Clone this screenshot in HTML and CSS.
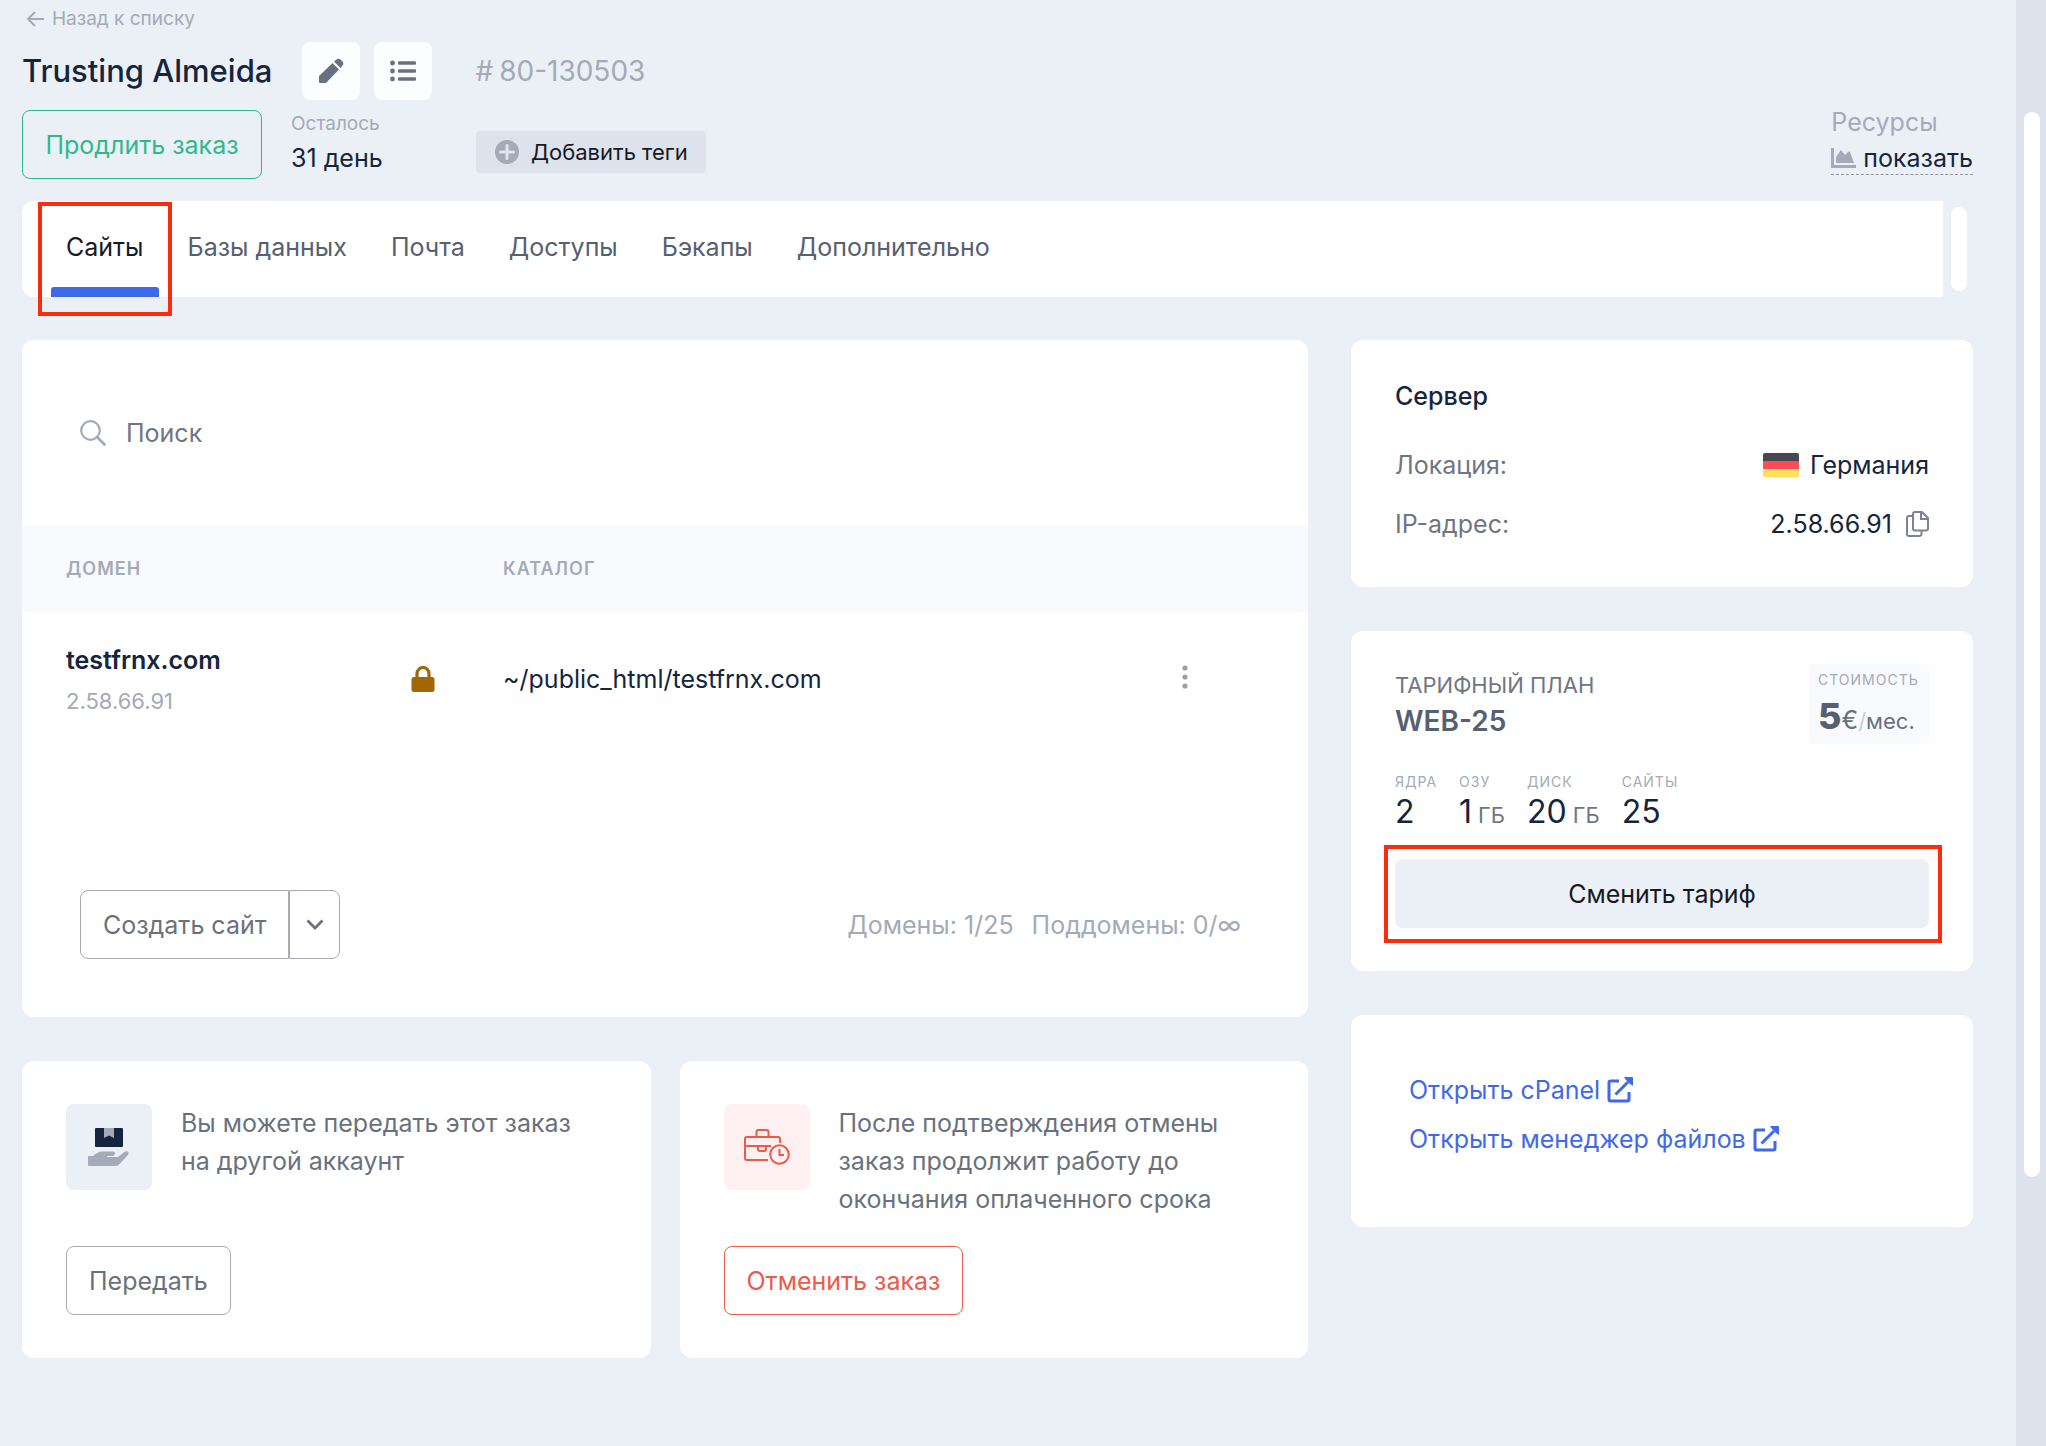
FILE: index.html
```html
<!DOCTYPE html>
<html lang="ru">
<head>
    <meta charset="UTF-8">
    <meta name="viewport" content="width=device-width, initial-scale=1.0">
    <title>Trusting Almeida</title>
    <link rel="stylesheet" href="styles.css">
</head>
<body>
    <div class="page">
        <header class="header">
            <a class="back" href="#">
                <svg width="18" height="16" viewBox="0 0 18 16" fill="none" stroke="currentColor" stroke-width="2"><path d="M18 8H2M9 1L2 8l7 7"/></svg>
                Назад к списку
            </a>
            <div class="title-row">
                <h1>Trusting Almeida</h1>
                <button class="icon-btn" aria-label="Переименовать">
                    <svg width="26" height="26" viewBox="0 0 26 26" fill="currentColor"><path d="M1 18L14.500 5l6.500 6.500L8 25H2q-1 0-1-1zM16 3.500L18.500 1.500q2-1.500 4 0l2 2q1.500 2 0 4L22.500 10z"/></svg>
                </button>
                <button class="icon-btn" aria-label="Список">
                    <svg width="26" height="22" viewBox="0 0 26 22" fill="currentColor"><circle cx="2.500" cy="3" r="2.400"/><circle cx="2.500" cy="11" r="2.400"/><circle cx="2.500" cy="19" r="2.400"/><rect x="8" y="1.300" width="18" height="3.400" rx="1"/><rect x="8" y="9.300" width="18" height="3.400" rx="1"/><rect x="8" y="17.300" width="18" height="3.400" rx="1"/></svg>
                </button>
                <span class="order-id"><span>#</span><span>80-130503</span></span>
            </div>
            <div class="meta-row">
                <button class="btn btn-green">Продлить заказ</button>
                <div class="left">
                    <span class="left-label">Осталось</span>
                    <span>31 день</span>
                </div>
                <button class="tags-btn">
                    <svg width="24" height="24" viewBox="0 0 24 24"><circle cx="12" cy="12" r="12" fill="#a3aab8"/><path d="M12 5.500v13M5.500 12h13" stroke="#dfe3ec" stroke-width="3" stroke-linecap="round"/></svg>
                    Добавить теги
                </button>
                <div class="resources">
                    <span class="resources-label">Ресурсы</span>
                    <a class="resources-link" href="#">
                        <svg width="25" height="20" viewBox="0 0 25 20" fill="#a3aab8"><path d="M0 0h3v17h22v3H0z"/><path d="M5 15V9l5-7 4 5 3-3q1-1 2 0l4 11z"/></svg>
                        показать
                    </a>
                </div>
            </div>
        </header>

        <div class="tabs-wrap">
            <nav class="tabs">
                <a class="tab active" href="#">Сайты<span class="mark mark-tab"></span></a>
                <a class="tab" href="#">Базы данных</a>
                <a class="tab" href="#">Почта</a>
                <a class="tab" href="#">Доступы</a>
                <a class="tab" href="#">Бэкапы</a>
                <a class="tab" href="#">Дополнительно</a>
            </nav>
            <div class="tabs-scroll"></div>
        </div>

        <div class="layout">
            <main class="main">
                <section class="card sites">
                    <label class="search">
                        <svg width="26" height="26" viewBox="0 0 26 26" fill="none" stroke="#a3aab8" stroke-width="2.200"><circle cx="10.500" cy="10.500" r="9.300"/><path d="M17 17l7.500 7.500" stroke-width="2.800" stroke-linecap="round"/></svg>
                        <input type="text" placeholder="Поиск" aria-label="Поиск">
                    </label>
                    <table class="sites-table">
                        <thead>
                            <tr>
                                <th class="col-domain">Домен</th>
                                <th class="col-ssl"></th>
                                <th class="col-path">Каталог</th>
                                <th class="col-menu"></th>
                            </tr>
                        </thead>
                        <tbody>
                            <tr>
                                <td>
                                    <div class="domain">testfrnx.com</div>
                                    <div class="ip">2.58.66.91</div>
                                </td>
                                <td>
                                    <svg width="24" height="26" viewBox="0 0 24 26"><path d="M6 12V7.500a6 6 0 0 1 12 0V12" fill="none" stroke="#a36605" stroke-width="3.200"/><rect x="0.500" y="11" width="23" height="15" rx="2.500" fill="#a36605"/></svg>
                                </td>
                                <td>~/public_html/testfrnx.com</td>
                                <td>
                                    <button class="menu-btn" aria-label="Меню">
                                        <svg width="6" height="24" viewBox="0 0 6 24" fill="#9ba0a8"><circle cx="3" cy="3" r="2.600"/><circle cx="3" cy="12" r="2.600"/><circle cx="3" cy="21" r="2.600"/></svg>
                                    </button>
                                </td>
                            </tr>
                        </tbody>
                    </table>
                    <div class="sites-footer">
                        <div class="btn-group">
                            <button class="btn btn-gray">Создать сайт</button>
                            <button class="btn btn-gray btn-drop" aria-label="Ещё">
                                <svg width="18" height="11" viewBox="0 0 18 11" fill="none" stroke="currentColor" stroke-width="2.800"><path d="M1.500 1.500L9 9l7.500-7.500"/></svg>
                            </button>
                        </div>
                        <div class="limits">
                            <span>Домены: 1/25</span>
                            <span>Поддомены: 0/∞</span>
                        </div>
                    </div>
                </section>

                <div class="actions">
                    <section class="card action">
                        <div class="action-info">
                            <div class="action-icon">
                                <svg width="42" height="38" viewBox="0 0 42 38"><path d="M8 0h26q1 0 1 1v17q0 1-1 1H8q-1 0-1-1V1q0-1 1-1z" fill="#14253d"/><path d="M16 0h10v10l-5-2.500L16 10z" fill="#a3aab8"/><path d="M1 28h4q5-4.500 9-4.500h11q2.500.5 2 2.500-.5 2-3 2h-5v1h9q2 0 4-1.500l5-4q2.500-1 3.500 1 .5 1.500-1 3L32 35.500Q30 38 27 38H1q-1 0-1-1v-8q0-1 1-1z" fill="#a3aab8"/></svg>
                            </div>
                            <p>Вы можете передать этот заказ на другой аккаунт</p>
                        </div>
                        <button class="btn btn-gray">Передать</button>
                    </section>
                    <section class="card action">
                        <div class="action-info">
                            <div class="action-icon danger">
                                <svg width="46" height="36" viewBox="0 0 46 36" fill="none" stroke="#ee5a49" stroke-width="2"><path d="M12.500 8V3q0-2 2-2h8q2 0 2 2v5M36 14v-4q0-2-2-2H3Q1 8 1 10v19q0 2 2 2h21M1 17h26M14 17v3q0 2 2 2h4q2 0 2-2v-3"/><circle cx="35.500" cy="25.500" r="9.300"/><path d="M35.500 20v6h4.500"/></svg>
                            </div>
                            <p>После подтверждения отмены заказ продолжит работу до окончания оплаченного срока</p>
                        </div>
                        <button class="btn btn-red">Отменить заказ</button>
                    </section>
                </div>
            </main>

            <aside class="side">
                <section class="card server">
                    <h2>Сервер</h2>
                    <div class="server-row">
                        <span class="muted">Локация:</span>
                        <span class="value">
                            <svg width="36" height="24" viewBox="0 0 36 24"><path d="M2 0h32q2 0 2 2v6H0V2q0-2 2-2z" fill="#464655"/><path d="M0 8h36v8H0z" fill="#ff4b55"/><path d="M0 16h36v6q0 2-2 2H2q-2 0-2-2z" fill="#ffe15a"/></svg>
                            Германия
                        </span>
                    </div>
                    <div class="server-row">
                        <span class="muted">IP-адрес:</span>
                        <span class="value value-ip">
                            2.58.66.91
                            <button class="copy-btn" aria-label="Копировать">
                                <svg width="23" height="26" viewBox="0 0 23 26" fill="none" stroke="currentColor" stroke-width="2"><path d="M9 1h7l6 6v10.500q0 2-2 2H9q-2 0-2-2V3q0-2 2-2zM15 1v7h7M7 5H3Q1 5 1 7v16q0 2 2 2h10q2.500 0 2.500-2v-3"/></svg>
                            </button>
                        </span>
                    </div>
                </section>

                <section class="card plan">
                    <div class="plan-head">
                        <div>
                            <div class="plan-label">Тарифный план</div>
                            <div class="plan-name">WEB-25</div>
                        </div>
                        <div class="price">
                            <div class="price-label">Стоимость</div>
                            <div class="price-value"><b>5</b><span class="euro">€</span><span class="slash">/</span>мес.</div>
                        </div>
                    </div>
                    <div class="specs">
                        <div><div class="spec-label">Ядра</div><div class="spec-value">2</div></div>
                        <div><div class="spec-label">Озу</div><div class="spec-value">1 <small>ГБ</small></div></div>
                        <div><div class="spec-label">Диск</div><div class="spec-value">20 <small>ГБ</small></div></div>
                        <div><div class="spec-label">Сайты</div><div class="spec-value">25</div></div>
                    </div>
                    <div class="plan-action">
                        <button class="btn btn-light">Сменить тариф</button>
                        <span class="mark mark-plan"></span>
                    </div>
                </section>

                <section class="card links">
                    <a href="#">Открыть cPanel
                        <svg width="26" height="26" viewBox="0 0 26 26" fill="none" stroke="currentColor" stroke-width="3"><path d="M12 4H3.500Q2 4 2 5.500v17Q2 24 3.500 24h17q1.500 0 1.500-1.500V15M8.500 17.500L21 5"/><path d="M17 0h8q1 0 1 1v8l-3-2-4-4z" fill="currentColor" stroke="none"/></svg>
                    </a>
                    <a href="#">Открыть менеджер файлов
                        <svg width="26" height="26" viewBox="0 0 26 26" fill="none" stroke="currentColor" stroke-width="3"><path d="M12 4H3.500Q2 4 2 5.500v17Q2 24 3.500 24h17q1.500 0 1.500-1.500V15M8.500 17.500L21 5"/><path d="M17 0h8q1 0 1 1v8l-3-2-4-4z" fill="currentColor" stroke="none"/></svg>
                    </a>
                </section>
            </aside>
        </div>
    </div>
    <div class="scrollbar"><div class="scrollbar-thumb"></div></div>
</body>
</html>
```
FILE: styles.css
```css
* {
    box-sizing: border-box;
}

body {
    display: flex;
    min-height: 100vh;
    margin: 0;
    background: #ebf0f7;
    color: #14253d;
    font-family: Inter, sans-serif;
    font-size: 25px;
    line-height: 38px;
}

h1, h2, p {
    margin: 0;
}

a {
    color: inherit;
    text-decoration: none;
}

button, input {
    font: inherit;
    color: inherit;
}

button {
    padding: 0;
    border: none;
    background: none;
    cursor: pointer;
}

svg {
    display: block;
    flex: none;
}

.page {
    flex: 1;
    min-width: 0;
    padding: 4px 43px 44px 22px;
}

.scrollbar {
    width: 30px;
    padding: 112px 6px 0 8px;
    background: #dee2ec;
}

.scrollbar-thumb {
    height: 1065px;
    border-radius: 8px;
    background: #fff;
}

/* header */
.back {
    display: flex;
    align-items: center;
    gap: 8px;
    padding-left: 4px;
    color: #a3aab8;
    font-size: 19px;
    line-height: 30px;
}

.title-row {
    display: flex;
    align-items: center;
    height: 58px;
    margin-top: 8px;
}

h1 {
    margin-right: 30px;
    font-size: 31px;
    font-weight: 500;
}

.icon-btn {
    display: flex;
    justify-content: center;
    align-items: center;
    width: 58px;
    height: 58px;
    margin-right: 14px;
    border-radius: 8px;
    background: #fcfdfe;
    color: #6a717e;
}

.order-id {
    display: flex;
    gap: 6px;
    margin-left: 29px;
    color: #a3aab8;
    font-size: 28px;
}

.meta-row {
    display: flex;
    align-items: flex-end;
    height: 69px;
    margin-top: 10px;
}

.btn {
    height: 69px;
    padding: 0 22px;
    border: 1px solid;
    border-radius: 8px;
    white-space: nowrap;
}

.btn-green {
    width: 240px;
    color: #2fb98a;
}

.btn-gray {
    border-color: #a6abb5;
    color: #6a717e;
}

.btn-red {
    color: #ee5a49;
}

.btn-light {
    width: 100%;
    border: none;
    background: #ebf0f6;
    color: #17191f;
}

.left {
    display: flex;
    flex-direction: column;
    width: 185px;
    margin-bottom: 2px;
    margin-left: 29px;
}

.left-label {
    color: #a3aab8;
    font-size: 19px;
    line-height: 30px;
}

.tags-btn {
    display: flex;
    align-items: center;
    gap: 12px;
    width: 230px;
    height: 42px;
    margin-bottom: 6px;
    padding-left: 19px;
    border-radius: 4px;
    background: #dee2ec;
    color: #17191f;
    font-size: 22px;
    white-space: nowrap;
}

.resources {
    margin-left: auto;
    margin-bottom: 4px;
}

.resources-label {
    display: block;
    color: #a3aab8;
}

.resources-link {
    display: flex;
    align-items: center;
    gap: 7px;
    height: 34px;
    border-bottom: 1px dashed #8d94a3;
}

/* tabs */
.tabs-wrap {
    display: flex;
    margin-top: 22px;
    padding-right: 6px;
}

.tabs {
    display: flex;
    flex: 1;
    gap: 14px;
    height: 96px;
    padding-left: 29px;
    border-radius: 12px 0 0 12px;
    background: #fff;
}

.tab {
    position: relative;
    padding: 27px 15px 0;
    color: #56606f;
    white-space: nowrap;
}

.tab.active {
    color: #17191f;
}

.tab.active::after {
    content: "";
    position: absolute;
    right: 0;
    bottom: 0;
    left: 0;
    height: 10px;
    border-radius: 3px 3px 0 0;
    background: #3f69e8;
}

.tabs-scroll {
    width: 16px;
    height: 84px;
    margin: 6px 0 0 8px;
    border-radius: 8px;
    background: #fff;
}

/* red frames around highlighted controls */
.mark {
    position: absolute;
    border: 4px solid #f92c0b;
    pointer-events: none;
}

.mark-tab {
    inset: 1px -13px -19px -13px;
}

.mark-plan {
    inset: -14px -13px -15px -11px;
}

/* content */
.layout {
    display: grid;
    grid-template-columns: 1286fr 622fr;
    align-items: start;
    gap: 43px;
    margin-top: 43px;
}

.card {
    border-radius: 12px;
    background: #fff;
}

.main, .side {
    display: flex;
    flex-direction: column;
    gap: 44px;
    min-width: 0;
}

.search {
    display: flex;
    align-items: center;
    gap: 20px;
    padding: 74px 58px 73px;
}

.search input {
    flex: 1;
    height: 38px;
    padding: 0;
    border: none;
    outline: none;
    background: none;
}

.search input::placeholder {
    color: #6f7682;
    opacity: 1;
}

.sites-table {
    width: 100%;
    border-collapse: collapse;
    table-layout: fixed;
}

.sites-table th {
    height: 87px;
    padding: 0;
    background: #f9fafe;
    color: #a3aab8;
    font-size: 18px;
    font-weight: 600;
    letter-spacing: 1px;
    text-align: left;
    text-transform: uppercase;
}

.sites-table td {
    height: 134px;
    padding: 0;
}

.sites-table th:first-child, .sites-table td:first-child {
    padding-left: 44px;
}

.sites-table .col-domain {
    width: 389px;
}

.sites-table .col-ssl {
    width: 92px;
}

.sites-table .col-menu {
    width: 132px;
}

.domain {
    margin-top: 2px;
    font-weight: 600;
}

.ip {
    margin-top: 3px;
    color: #a3aab8;
    font-size: 22px;
}

.menu-btn {
    padding: 6px;
}

.sites-footer {
    display: flex;
    justify-content: space-between;
    align-items: center;
    padding: 144px 67px 58px 58px;
}

.btn-group {
    display: flex;
}

.btn-group .btn:first-child {
    border-radius: 8px 0 0 8px;
}

.btn-group .btn-drop {
    width: 51px;
    padding: 0 16px;
    border-radius: 0 8px 8px 0;
}

.limits {
    display: flex;
    gap: 18px;
    color: #a3aab8;
}

.actions {
    display: grid;
    grid-template-columns: 1fr 1fr;
    gap: 29px;
}

.action {
    display: flex;
    flex-direction: column;
    align-items: flex-start;
    justify-content: space-between;
    gap: 28px;
    padding: 43px 44px;
}

.action-info {
    display: flex;
    gap: 29px;
    color: #6a717e;
}

.action-info p {
    max-width: 410px;
}

.action-icon {
    display: flex;
    flex: none;
    justify-content: center;
    align-items: center;
    width: 86px;
    height: 86px;
    border-radius: 8px;
    background: #ebf0f6;
}

.action-icon.danger {
    background: #fff1f1;
}

/* sidebar */
.server {
    padding: 37px 44px 44px;
}

h2 {
    margin-bottom: 31px;
    font-size: 25px;
    font-weight: 500;
}

.server-row {
    display: flex;
    justify-content: space-between;
}

.server-row + .server-row {
    margin-top: 21px;
}

.muted {
    color: #6f7682;
}

.value {
    display: flex;
    align-items: center;
    gap: 11px;
}

.value-ip {
    gap: 14px;
}

.copy-btn {
    color: #7d8490;
}

.plan {
    padding: 33px 44px 43px;
}

.plan-head {
    display: flex;
    justify-content: space-between;
}

.plan-label {
    margin-top: 4px;
    color: #6f7682;
    font-size: 22px;
    line-height: 34px;
    text-transform: uppercase;
}

.plan-name {
    color: #56606f;
    font-size: 28px;
    font-weight: 600;
}

.price {
    width: 120px;
    height: 80px;
    padding: 5px 9px;
    border-radius: 4px;
    background: #f9fafe;
}

.price-label, .spec-label {
    color: #a3aab8;
    font-size: 14px;
    line-height: 22px;
    letter-spacing: 1px;
    text-transform: uppercase;
}

.price-value {
    color: #6a717e;
    font-size: 22px;
    line-height: 50px;
    white-space: nowrap;
}

.price-value b {
    color: #56606f;
    font-size: 36px;
    font-weight: 800;
}

.euro {
    font-size: 25px;
}

.slash {
    color: #c9cdd6;
}

.specs {
    display: flex;
    gap: 22px;
    margin-top: 27px;
}

.spec-value {
    font-size: 32px;
}

.spec-value small {
    margin-left: -3px;
    color: #6f7682;
    font-size: 22px;
}

.plan-action {
    position: relative;
    margin-top: 25px;
}

.plan-action .btn {
    display: block;
}

.links {
    display: flex;
    flex-direction: column;
    gap: 11px;
    padding: 56px 58px 69px;
    color: #3f69e8;
}

.links a {
    display: flex;
    align-items: center;
    gap: 7px;
}
```
